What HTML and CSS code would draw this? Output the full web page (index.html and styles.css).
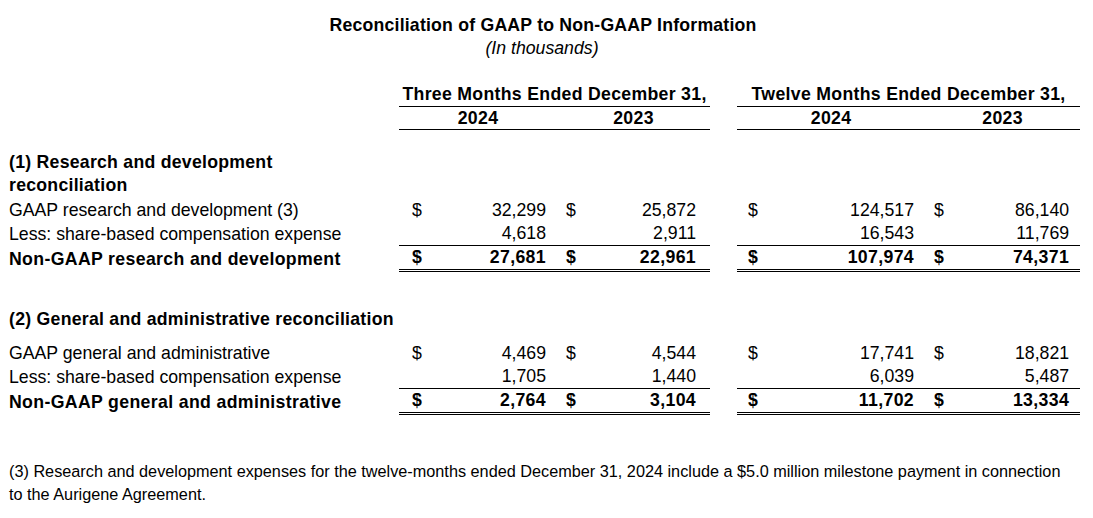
FILE: index.html
```html
<!DOCTYPE html>
<html lang="en">
<head>
<meta charset="utf-8">
<title>Reconciliation of GAAP to Non-GAAP Information</title>
<link rel="stylesheet" href="styles.css">
</head>
<body>
<div class="page">
  <h1 class="title">Reconciliation of GAAP to Non-GAAP Information</h1>
  <p class="subtitle">(In thousands)</p>
  <table class="recon">
    <colgroup>
      <col class="c-label">
      <col class="c-cur">
      <col class="c-num-a">
      <col class="c-cur">
      <col class="c-num-b">
      <col class="c-gap">
      <col class="c-cur">
      <col class="c-num-c">
      <col class="c-cur">
      <col class="c-num-d">
    </colgroup>
    <thead>
      <tr class="period">
        <th class="label"></th>
        <th colspan="4" class="rule">Three Months Ended December 31,</th>
        <th class="gap"></th>
        <th colspan="4" class="rule">Twelve Months Ended December 31,</th>
      </tr>
      <tr class="years">
        <th class="label"></th>
        <th colspan="2" class="rule">2024</th>
        <th colspan="2" class="rule">2023</th>
        <th class="gap"></th>
        <th colspan="2" class="rule">2024</th>
        <th colspan="2" class="rule">2023</th>
      </tr>
    </thead>
    <tbody>
      <tr class="spacer-top"><td colspan="10"></td></tr>
      <tr class="section section-one">
        <td class="label">(1) Research and development<br>reconciliation</td>
        <td colspan="9"></td>
      </tr>
      <tr>
        <td class="label">GAAP research and development (3)</td>
        <td class="cur">$</td><td class="num">32,299</td>
        <td class="cur cur-b">$</td><td class="num num-b">25,872</td>
        <td class="gap"></td>
        <td class="cur cur-c">$</td><td class="num">124,517</td>
        <td class="cur cur-b">$</td><td class="num">86,140</td>
      </tr>
      <tr class="less">
        <td class="label">Less: share-based compensation expense</td>
        <td class="cur"></td><td class="num">4,618</td>
        <td class="cur cur-b"></td><td class="num num-b">2,911</td>
        <td class="gap"></td>
        <td class="cur cur-c"></td><td class="num">16,543</td>
        <td class="cur cur-b"></td><td class="num">11,769</td>
      </tr>
      <tr class="total">
        <td class="label">Non-GAAP research and development</td>
        <td class="cur">$</td><td class="num">27,681</td>
        <td class="cur cur-b">$</td><td class="num num-b">22,961</td>
        <td class="gap"></td>
        <td class="cur cur-c">$</td><td class="num">107,974</td>
        <td class="cur cur-b">$</td><td class="num">74,371</td>
      </tr>
      <tr class="spacer-mid"><td colspan="10"></td></tr>
      <tr class="section">
        <td class="label nowrap">(2) General and administrative reconciliation</td>
        <td colspan="9"></td>
      </tr>
      <tr class="spacer-small"><td colspan="10"></td></tr>
      <tr>
        <td class="label">GAAP general and administrative</td>
        <td class="cur">$</td><td class="num">4,469</td>
        <td class="cur cur-b">$</td><td class="num num-b">4,544</td>
        <td class="gap"></td>
        <td class="cur cur-c">$</td><td class="num">17,741</td>
        <td class="cur cur-b">$</td><td class="num">18,821</td>
      </tr>
      <tr class="less">
        <td class="label">Less: share-based compensation expense</td>
        <td class="cur"></td><td class="num">1,705</td>
        <td class="cur cur-b"></td><td class="num num-b">1,440</td>
        <td class="gap"></td>
        <td class="cur cur-c"></td><td class="num">6,039</td>
        <td class="cur cur-b"></td><td class="num">5,487</td>
      </tr>
      <tr class="total">
        <td class="label">Non-GAAP general and administrative</td>
        <td class="cur">$</td><td class="num">2,764</td>
        <td class="cur cur-b">$</td><td class="num num-b">3,104</td>
        <td class="gap"></td>
        <td class="cur cur-c">$</td><td class="num">11,702</td>
        <td class="cur cur-b">$</td><td class="num">13,334</td>
      </tr>
    </tbody>
  </table>
  <p class="footnote">(3) Research and development expenses for the twelve-months ended December 31, 2024 include a $5.0 million milestone payment in connection to the Aurigene Agreement.</p>
</div>
</body>
</html>
```

FILE: styles.css
```css
html, body {
  margin: 0;
  padding: 0;
  background: #ffffff;
}

body {
  font-family: "Liberation Sans", Arial, sans-serif;
  font-size: 17.7px;
  color: #000000;
}

.page {
  width: 1093px;
  padding-top: 14px;
}

.title {
  width: 1086px;
  margin: 0;
  font-size: 17.7px;
  font-weight: bold;
  letter-spacing: 0.2px;
  line-height: 23px;
  text-align: center;
}

.subtitle {
  width: 1084px;
  margin: 0;
  font-style: italic;
  line-height: 23px;
  text-align: center;
}

.recon {
  width: 1080px;
  margin-top: 23px;
  table-layout: fixed;
  border-collapse: separate;
  border-spacing: 0;
  font-size: 17.7px;
}

.c-label { width: 399px; }
.c-cur { width: 40px; }
.c-num-a { width: 118px; }
.c-num-b { width: 113px; }
.c-gap { width: 27px; }
.c-num-c { width: 148px; }
.c-num-d { width: 115px; }

.recon th,
.recon td {
  padding: 0;
  line-height: 23px;
  white-space: nowrap;
  vertical-align: middle;
}

.recon th {
  font-weight: bold;
  letter-spacing: 0.3px;
  text-align: center;
}

.recon .period th {
  line-height: 23px;
}

.recon .years th {
  line-height: 22px;
}

.recon th.rule {
  border-bottom: 1px solid #000000;
}

.recon td.label {
  padding-left: 9px;
  text-align: left;
}

.recon .section td {
  font-weight: bold;
  letter-spacing: 0.25px;
}

.recon .section-one td.label {
  white-space: normal;
  padding-bottom: 2px;
}

.recon .nowrap {
  white-space: nowrap;
}

.recon td.cur {
  text-align: left;
  padding-left: 13px;
}

.recon td.cur-b {
  padding-left: 9px;
}

.recon td.cur-c {
  padding-left: 11px;
}

.recon td.num {
  text-align: right;
  padding-right: 11px;
}

.recon td.num-b {
  padding-right: 14px;
}

.recon .less td {
  border-bottom: 1px solid #000000;
}

.recon .total td {
  font-weight: bold;
  letter-spacing: 0.35px;
  border-bottom: 3px double #000000;
}

.recon .less td.label,
.recon .less td.gap,
.recon .total td.label,
.recon .total td.gap {
  border-bottom: 0;
}

.recon .spacer-top td {
  height: 21px;
  line-height: 0;
}

.recon .spacer-mid td {
  height: 36px;
  line-height: 0;
}

.recon .spacer-small td {
  height: 11px;
  line-height: 0;
}

.footnote {
  width: 1068px;
  margin: 45px 0 0 0;
  padding-left: 9px;
  line-height: 23px;
  font-size: 16.25px;
}
```
